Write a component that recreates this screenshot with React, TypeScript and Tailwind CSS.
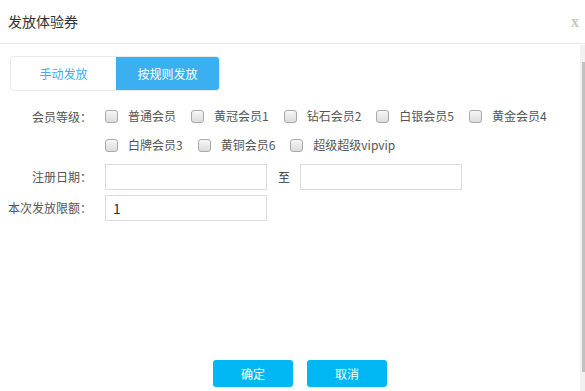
import React from "react";

const font = { fontFamily: '"Microsoft YaHei", "Noto Sans CJK SC", "Noto Sans", sans-serif' };

const row1 = ["普通会员", "黄冠会员1", "钻石会员2", "白银会员5", "黄金会员4"];
const row2 = ["白牌会员3", "黄铜会员6", "超级超级vipvip"];

function Check({ label }: { label: string }) {
  return (
    <label className="flex items-center mr-[15px]">
      <span className="w-[13px] h-[13px] rounded-[3px] border border-[#a9a9a9] bg-gradient-to-b from-[#f6f6f6] to-[#dcdcdc] mr-[10px]" />
      <span className="text-[12px] text-[#555] whitespace-nowrap">{label}</span>
    </label>
  );
}

export default function App() {
  return (
    <div className="w-[585px] h-[391px] bg-white relative overflow-hidden" style={font}>
      <div className="h-[44px] flex items-center justify-between pl-[8px] pr-[6px] border-b border-[#e8e8e8]">
        <span className="text-[14px] text-[#333]">发放体验券</span>
        <span className="text-[16px] text-[#c8c8c8] font-bold" style={{ fontFamily: '"Liberation Serif", serif' }}>x</span>
      </div>

      <div className="absolute right-0 top-[45px] bottom-0 w-[5px] bg-[#f1f1f1]">
        <div className="absolute right-0 top-[17px] h-[310px] w-[3px] bg-[#c1c1c1]" />
      </div>

      <div className="pl-[10px] pt-[12px]">
        <div className="flex w-[210px] h-[35px] rounded-[4px] border border-[#e8e8e8] overflow-hidden text-[12px]">
          <div className="w-[105px] flex items-center justify-center text-[#3aaeef]">手动发放</div>
          <div className="flex-1 flex items-center justify-center bg-[#3bb0f1] text-white">按规则发放</div>
        </div>
      </div>

      <div className="mt-[15px] text-[12px] text-[#555]">
        <div className="flex">
          <div className="w-[92px] text-right pt-[1px] h-[20px] leading-[20px]">会员等级：</div>
          <div className="ml-[13px]">
            <div className="flex h-[20px]">
              {row1.map((l) => (
                <Check key={l} label={l} />
              ))}
            </div>
            <div className="flex h-[20px] mt-[9px]">
              {row2.map((l) => (
                <Check key={l} label={l} />
              ))}
            </div>
          </div>
        </div>

        <div className="flex items-center mt-[9px]">
          <div className="w-[92px] text-right">注册日期：</div>
          <input className="ml-[13px] w-[162px] h-[26px] border border-[#dcdcdc] outline-none" />
          <span className="ml-[11px] mr-[10px] text-[12px] text-[#333]">至</span>
          <input className="w-[162px] h-[26px] border border-[#dcdcdc] outline-none" />
        </div>

        <div className="flex items-center mt-[5px]">
          <div className="w-[92px] text-right">本次发放限额：</div>
          <input
            defaultValue="1"
            className="ml-[13px] w-[162px] h-[26px] border border-[#dcdcdc] outline-none px-[7px] text-[14px] text-[#333]"
          />
        </div>
      </div>

      <div className="absolute left-0 right-0 top-[360px] flex pl-[213px] gap-[14px]">
        <button className="w-[80px] h-[27px] rounded-[3px] bg-[#00b7f3] text-white text-[12px]">确定</button>
        <button className="w-[80px] h-[27px] rounded-[3px] bg-[#00b7f3] text-white text-[12px]">取消</button>
      </div>
    </div>
  );
}
